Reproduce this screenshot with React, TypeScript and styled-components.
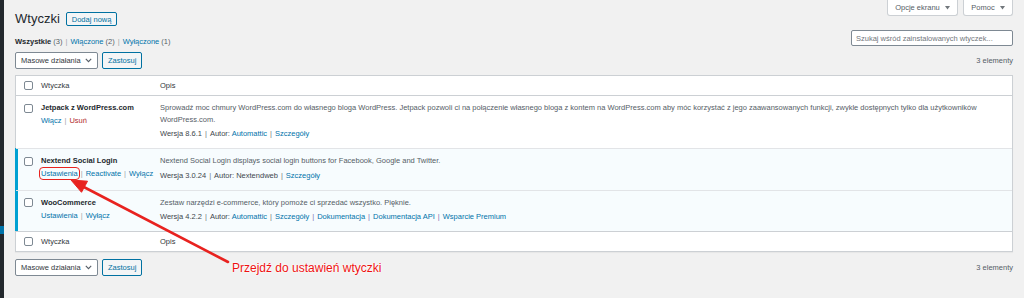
import React from 'react';
import styled, { createGlobalStyle } from 'styled-components';

const FONT = `"Liberation Sans", Arial, sans-serif`;

const Global = createGlobalStyle`
  html, body { margin: 0; padding: 0; background: #f1f1f1; }
  body { font-family: ${FONT}; width: 1024px; height: 298px; overflow: hidden; color: #444; }
  * { box-sizing: border-box; }
`;

const Page = styled.div`
  display: flex;
  min-height: 298px;
  position: relative;
  font-size: 7.5px;
`;

const Sidebar = styled.div`
  width: 4px;
  flex-shrink: 0;
  background: #23282d;
  display: flex;
  flex-direction: column;
`;

const SideMark = styled.div`
  margin-top: 226px;
  height: 8px;
  background: #0073aa;
`;

const Main = styled.div`
  flex: 1;
  padding: 0 11px;
`;

const Header = styled.div`
  display: flex;
  justify-content: space-between;
  align-items: flex-start;
`;

const LeftCol = styled.div`
  display: flex;
  flex-direction: column;
`;

const RightCol = styled.div`
  display: flex;
  flex-direction: column;
  align-items: flex-end;
`;

const TitleRow = styled.div`
  margin-top: 12px;
  display: flex;
  align-items: center;
  gap: 6px;
`;

const Title = styled.h1`
  margin: 0;
  font-size: 13px;
  font-weight: 400;
  line-height: 14px;
  color: #23282d;
`;

const Button = styled.div<{ $h?: number }>`
  height: ${(p) => p.$h ?? 17}px;
  padding: 0 5px;
  display: flex;
  align-items: center;
  border: 1px solid #0071a1;
  border-radius: 2px;
  background: #f3f5f6;
  color: #0071a1;
  font-size: 7.5px;
  white-space: nowrap;
`;

const Filters = styled.div`
  margin-top: 10px;
  line-height: 12px;
  color: #555d66;
  white-space: nowrap;
`;

const FilterCurrent = styled.span`
  font-weight: 700;
  color: #23282d;
`;

const FilterLink = styled.span`
  color: #0073aa;
`;

const FilterSep = styled.span`
  color: #a0a5aa;
  margin: 0 3px;
`;

const BulkRow = styled.div<{ $top: number }>`
  margin-top: ${(p) => p.$top}px;
  display: flex;
  align-items: center;
  gap: 4px;
`;

const SelectBox = styled.div`
  width: 83px;
  height: 17px;
  border: 1px solid #7e8993;
  border-radius: 2px;
  background: #fff;
  display: flex;
  align-items: center;
  justify-content: space-between;
  padding: 0 5px;
  color: #32373c;
  white-space: nowrap;
`;

const Tabs = styled.div`
  display: flex;
  gap: 5px;
`;

const Tab = styled.div<{ $w: number }>`
  width: ${(p) => p.$w}px;
  height: 16px;
  background: #fff;
  border: 1px solid #ccd0d4;
  border-top: none;
  border-radius: 0 0 3px 3px;
  display: flex;
  align-items: center;
  justify-content: center;
  gap: 5px;
  color: #555d66;
`;

const Search = styled.input`
  margin-top: 14px;
  width: 162px;
  height: 16px;
  border: 1px solid #7e8993;
  border-radius: 2px;
  background: #fff;
  padding: 0 4px;
  font-family: ${FONT};
  font-size: 7.5px;
  outline: none;
  &::placeholder { color: #72777c; }
`;

const Count = styled.div<{ $top?: number }>`
  margin-top: ${(p) => p.$top ?? 0}px;
  line-height: 12px;
  color: #555d66;
`;

const Table = styled.div`
  margin-top: 6px;
  background: #fff;
  border: 1px solid #ccd0d4;
  box-shadow: 0 1px 1px rgba(0, 0, 0, 0.04);
`;

const HeadRow = styled.div<{ $foot?: boolean }>`
  display: grid;
  grid-template-columns: 25px 119px 1fr;
  align-items: center;
  height: 20px;
  color: #32373c;
  ${(p) => (p.$foot ? 'border-top: 1px solid #ccd0d4;' : 'border-bottom: 1px solid #ccd0d4;')}
`;

const HeadLabel = styled.span`
  color: #32373c;
`;

const Row = styled.div<{ $active?: boolean }>`
  display: grid;
  grid-template-columns: 25px 119px 1fr;
  padding: 6px 0 8px;
  background: ${(p) => (p.$active ? '#f7fcfe' : '#fff')};
  box-shadow: ${(p) => (p.$active ? '-1px 0 0 #00a0d2, inset 2px 0 0 #00a0d2' : 'none')};
  & + & { border-top: 1px solid #e2e4e7; }
`;

const CheckCell = styled.div`
  padding-left: 8px;
`;

const Check = styled.div<{ $mt?: number }>`
  width: 9px;
  height: 9px;
  margin-top: ${(p) => p.$mt ?? 0}px;
  border: 1px solid #7e8993;
  border-radius: 2px;
  background: #fff;
`;

const NameCell = styled.div`
  line-height: 12px;
`;

const PluginName = styled.div`
  font-weight: 700;
  color: #23282d;
`;

const Actions = styled.div`
  margin-top: 1px;
  white-space: nowrap;
`;

const ActionLink = styled.span<{ $danger?: boolean; $highlight?: boolean }>`
  color: ${(p) => (p.$danger ? '#b32d2e' : '#0073aa')};
  ${(p) =>
    p.$highlight
      ? 'outline: 1.5px solid #e8221f; outline-offset: 1.5px; border-radius: 2px;'
      : ''}
`;

const ActionSep = styled.span`
  color: #a0a5aa;
  margin: 0 3px;
`;

const DescCell = styled.div`
  padding-right: 10px;
  line-height: 12px;
`;

const Desc = styled.div`
  color: #555d66;
  line-height: 11.5px;
`;

const Version = styled.div`
  margin-top: 3px;
  color: #40464d;
`;

const VLink = styled.span`
  color: #0073aa;
`;

const VSep = styled.span<{ $c?: string }>`
  color: ${(p) => p.$c ?? '#72777c'};
  margin: 0 3px;
`;

const BottomRow = styled.div`
  margin-top: 7px;
  display: flex;
  justify-content: space-between;
  align-items: center;
`;

const Overlay = styled.svg`
  position: absolute;
  left: 0;
  top: 0;
  pointer-events: none;
`;

const Annotation = styled.div`
  position: absolute;
  left: 232px;
  top: 261px;
  font-family: ${FONT};
  font-size: 12px;
  line-height: 14px;
  color: #ee1111;
  white-space: nowrap;
  text-shadow: 0 0 1px #fff, 0 0 2px #fff, 0 0 3px #fff;
`;

const Chevron = () => (
  <svg width="7" height="5" viewBox="0 0 7 5">
    <path d="M0.8 0.8 L3.5 3.6 L6.2 0.8" fill="none" stroke="#555d66" strokeWidth="1.1" />
  </svg>
);

const Tri = () => (
  <svg width="5" height="4" viewBox="0 0 5 4">
    <path d="M0 0 H5 L2.5 3.5 Z" fill="#72777c" />
  </svg>
);

const Bulk = ({ top }: { top: number }) => (
  <BulkRow $top={top}>
    <SelectBox>
      <span>Masowe działania</span>
      <Chevron />
    </SelectBox>
    <Button>Zastosuj</Button>
  </BulkRow>
);

type Plugin = {
  name: string;
  active: boolean;
  actions: { label: string; danger?: boolean; highlight?: boolean }[];
  desc: string;
  version: string;
  author: string;
  authorLink: boolean;
  links: string[];
};

const plugins: Plugin[] = [
  {
    name: 'Jetpack z WordPress.com',
    active: false,
    actions: [{ label: 'Włącz' }, { label: 'Usuń', danger: true }],
    desc:
      'Sprowadź moc chmury WordPress.com do własnego bloga WordPress. Jetpack pozwoli ci na połączenie własnego bloga z kontem na WordPress.com aby móc korzystać z jego zaawansowanych funkcji, zwykle dostępnych tylko dla użytkowników WordPress.com.',
    version: '8.6.1',
    author: 'Automattic',
    authorLink: true,
    links: ['Szczegóły'],
  },
  {
    name: 'Nextend Social Login',
    active: true,
    actions: [{ label: 'Ustawienia', highlight: true }, { label: 'Reactivate' }, { label: 'Wyłącz' }],
    desc: 'Nextend Social Login displays social login buttons for Facebook, Google and Twitter.',
    version: '3.0.24',
    author: 'Nextendweb',
    authorLink: false,
    links: ['Szczegóły'],
  },
  {
    name: 'WooCommerce',
    active: true,
    actions: [{ label: 'Ustawienia' }, { label: 'Wyłącz' }],
    desc: 'Zestaw narzędzi e-commerce, który pomoże ci sprzedać wszystko. Pięknie.',
    version: '4.2.2',
    author: 'Automattic',
    authorLink: true,
    links: ['Szczegóły', 'Dokumentacja', 'Dokumentacja API', 'Wsparcie Premium'],
  },
];

export default function App() {
  return (
    <>
      <Global />
      <Page>
        <Sidebar>
          <SideMark />
        </Sidebar>
        <Main>
          <Header>
            <LeftCol>
              <TitleRow>
                <Title>Wtyczki</Title>
                <Button $h={14}>Dodaj nową</Button>
              </TitleRow>
              <Filters>
                <FilterCurrent>Wszystkie</FilterCurrent> (3)
                <FilterSep>|</FilterSep>
                <FilterLink>Włączone</FilterLink> (2)
                <FilterSep>|</FilterSep>
                <FilterLink>Wyłączone</FilterLink> (1)
              </Filters>
              <Bulk top={4} />
            </LeftCol>
            <RightCol>
              <Tabs>
                <Tab $w={71}>
                  <span>Opcje ekranu</span>
                  <Tri />
                </Tab>
                <Tab $w={50}>
                  <span>Pomoc</span>
                  <Tri />
                </Tab>
              </Tabs>
              <Search placeholder="Szukaj wśród zainstalowanych wtyczek..." />
              <Count $top={9}>3 elementy</Count>
            </RightCol>
          </Header>

          <Table>
            <HeadRow>
              <CheckCell>
                <Check />
              </CheckCell>
              <HeadLabel>Wtyczka</HeadLabel>
              <HeadLabel>Opis</HeadLabel>
            </HeadRow>
            {plugins.map((p) => (
              <Row key={p.name} $active={p.active}>
                <CheckCell>
                  <Check $mt={1.5} />
                </CheckCell>
                <NameCell>
                  <PluginName>{p.name}</PluginName>
                  <Actions>
                    {p.actions.map((a, i) => (
                      <React.Fragment key={a.label}>
                        {i > 0 && <ActionSep>|</ActionSep>}
                        <ActionLink $danger={a.danger} $highlight={a.highlight}>
                          {a.label}
                        </ActionLink>
                      </React.Fragment>
                    ))}
                  </Actions>
                </NameCell>
                <DescCell>
                  <Desc>{p.desc}</Desc>
                  <Version>
                    Wersja {p.version}
                    <VSep>|</VSep>
                    Autor: {p.authorLink ? <VLink>{p.author}</VLink> : p.author}
                    {p.links.map((l, i) => (
                      <React.Fragment key={l}>
                        <VSep $c={i > 0 ? '#826eb4' : undefined}>|</VSep>
                        <VLink>{l}</VLink>
                      </React.Fragment>
                    ))}
                  </Version>
                </DescCell>
              </Row>
            ))}
            <HeadRow $foot>
              <CheckCell>
                <Check />
              </CheckCell>
              <HeadLabel>Wtyczka</HeadLabel>
              <HeadLabel>Opis</HeadLabel>
            </HeadRow>
          </Table>

          <BottomRow>
            <Bulk top={0} />
            <Count>3 elementy</Count>
          </BottomRow>
        </Main>

        <Overlay width="1024" height="298" viewBox="0 0 1024 298">
          <line x1="228" y1="262" x2="80" y2="185" stroke="#e8221f" strokeWidth="2.6" strokeLinecap="round" />
          <polygon points="71,180 81.5,192.3 87.5,181.2" fill="#e8221f" stroke="#e8221f" strokeWidth="1" strokeLinejoin="round" />
        </Overlay>
        <Annotation>Przejdź do ustawień wtyczki</Annotation>
      </Page>
    </>
  );
}
